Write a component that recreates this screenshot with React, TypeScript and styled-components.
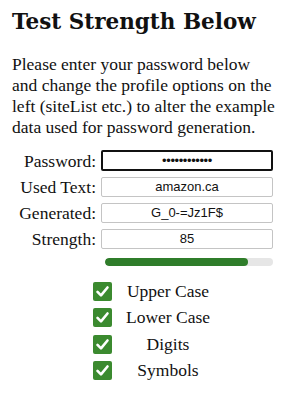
import { createGlobalStyle } from "styled-components";
import styled from "styled-components";

const GlobalStyle = createGlobalStyle`
  body {
    margin: 0;
    background: #fff;
    color: #111;
    font-family: "Liberation Serif", Georgia, serif;
  }
`;

const fields = [
  { label: "Password:", value: "••••••••••••", focused: true },
  { label: "Used Text:", value: "amazon.ca" },
  { label: "Generated:", value: "G_0-=Jz1F$" },
  { label: "Strength:", value: "85" },
];

const options = ["Upper Case", "Lower Case", "Digits", "Symbols"];

const strength = 85;

function CheckIcon() {
  return (
    <svg width="19" height="19" viewBox="0 0 19 19">
      <rect width="19" height="19" rx="2" fill="#3b8a2f" />
      <path
        d="M4.5 9.8 L8 13.3 L14.5 5.5"
        fill="none"
        stroke="#fff"
        strokeWidth="2.6"
        strokeLinecap="round"
        strokeLinejoin="round"
      />
    </svg>
  );
}

export default function App() {
  return (
    <Page>
      <GlobalStyle />
      <Title>Test Strength Below</Title>
      <Intro>
        Please enter your password below and change the profile options on the
        left (siteList etc.) to alter the example data used for password
        generation.
      </Intro>
      <Form>
        {fields.map((f) => (
          <Row key={f.label}>
            <Label>{f.label}</Label>
            <Field $focused={f.focused}>{f.value}</Field>
          </Row>
        ))}
        <Row>
          <span />
          <Meter>
            <MeterFill style={{ width: `${strength}%` }} />
          </Meter>
        </Row>
      </Form>
      <Options>
        {options.map((o) => (
          <Option key={o}>
            <CheckIcon />
            <OptionLabel>{o}</OptionLabel>
          </Option>
        ))}
      </Options>
    </Page>
  );
}

const Page = styled.div`
  padding: 0 12px;
`;

const Title = styled.h1`
  font-family: "DejaVu Serif", Georgia, serif;
  font-size: 21.5px;
  font-weight: bold;
  margin: 0;
  padding-top: 8px;
  line-height: 28px;
`;

const Intro = styled.p`
  font-size: 17.5px;
  line-height: 21px;
  margin: 18px 0 12px;
`;

const Form = styled.div`
  display: flex;
  flex-direction: column;
  gap: 6px;
`;

const Row = styled.div`
  display: grid;
  grid-template-columns: 84px 172px;
  column-gap: 5px;
  align-items: center;
`;

const Label = styled.div`
  text-align: right;
  font-size: 17.5px;
  line-height: 20px;
`;

const Field = styled.div<{ $focused?: boolean }>`
  box-sizing: border-box;
  height: ${(p) => (p.$focused ? "21px" : "20px")};
  border: ${(p) => (p.$focused ? "2px solid #111" : "1px solid #c4c4c4")};
  border-radius: 2px;
  font-family: "Liberation Sans", Arial, sans-serif;
  font-size: 13px;
  line-height: 17px;
  text-align: center;
  color: #111;
  letter-spacing: ${(p) => (p.$focused ? "-0.4px" : "0")};
`;

const Meter = styled.div`
  height: 8px;
  margin: 3px 0 0 4px;
  background: #e6e6e6;
  border-radius: 4px;
  overflow: hidden;
`;

const MeterFill = styled.div`
  height: 100%;
  background: #2f7d2a;
  border-radius: 4px;
`;

const Options = styled.div`
  display: flex;
  flex-direction: column;
  gap: 7.3px;
  margin: 16px 0 0 81px;
`;

const Option = styled.div`
  display: grid;
  grid-template-columns: 19px 112px;
  align-items: center;
`;

const OptionLabel = styled.div`
  text-align: center;
  font-size: 17.5px;
  line-height: 19px;
`;
